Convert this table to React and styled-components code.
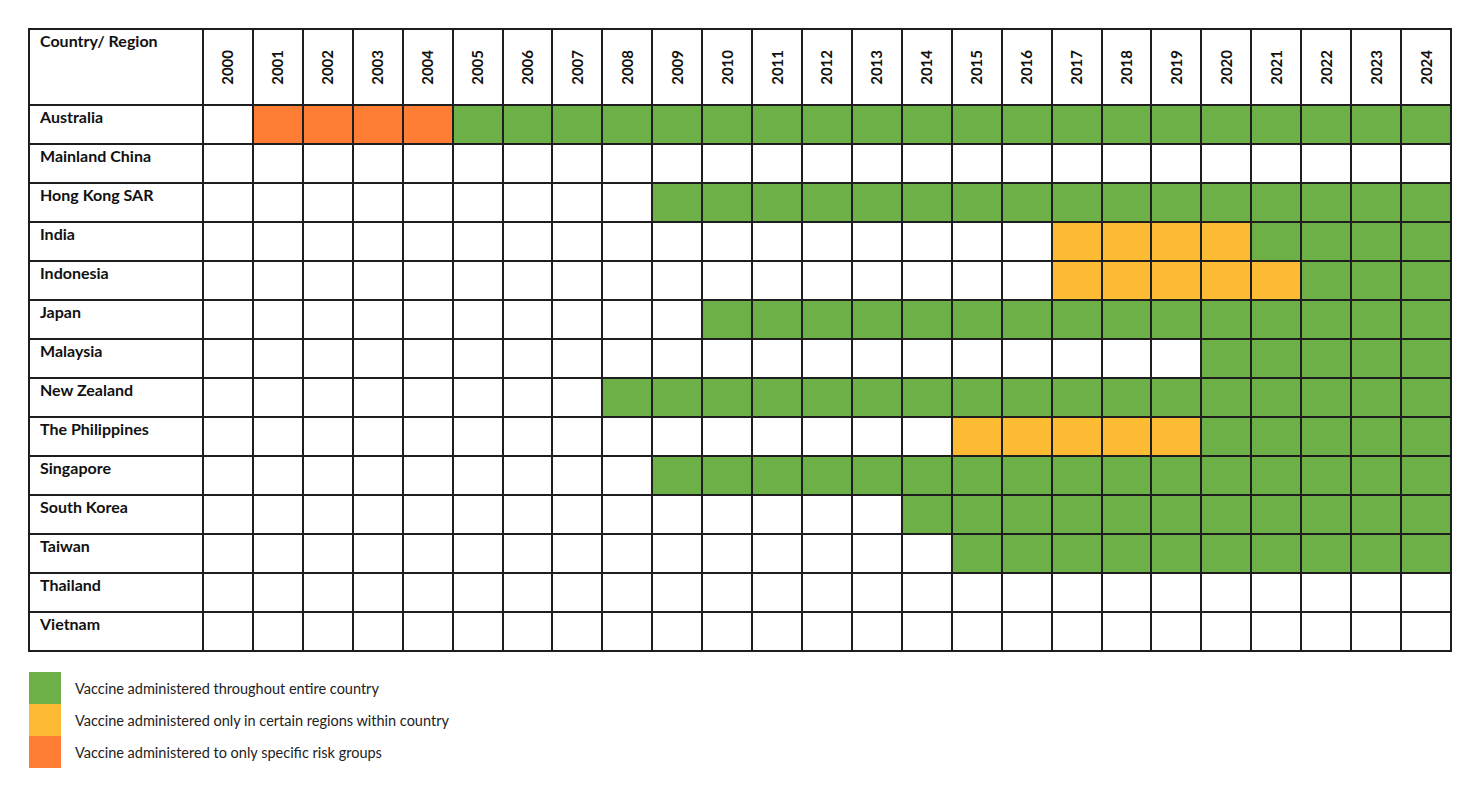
import React from "react";
import styled, { createGlobalStyle } from "styled-components";

const GlobalStyle = createGlobalStyle`
  html, body {
    margin: 0;
    padding: 0;
    background: #ffffff;
  }
  body {
    font-family: "Lato", "Liberation Sans", sans-serif;
    color: #111;
  }
`;

const GREEN = "#6db048";
const YELLOW = "#fdbb33";
const ORANGE = "#fe7d34";

const YEARS = Array.from({ length: 25 }, (_, i) => 2000 + i);

// each entry: name, then [from, to, colour] spans
const ROWS = [
  ["Australia", [2001, 2004, ORANGE], [2005, 2024, GREEN]],
  ["Mainland China"],
  ["Hong Kong SAR", [2009, 2024, GREEN]],
  ["India", [2017, 2020, YELLOW], [2021, 2024, GREEN]],
  ["Indonesia", [2017, 2021, YELLOW], [2022, 2024, GREEN]],
  ["Japan", [2010, 2024, GREEN]],
  ["Malaysia", [2020, 2024, GREEN]],
  ["New Zealand", [2008, 2024, GREEN]],
  ["The Philippines", [2015, 2019, YELLOW], [2020, 2024, GREEN]],
  ["Singapore", [2009, 2024, GREEN]],
  ["South Korea", [2014, 2024, GREEN]],
  ["Taiwan", [2015, 2024, GREEN]],
  ["Thailand"],
  ["Vietnam"],
];

const LEGEND = [
  [GREEN, "Vaccine administered throughout entire country"],
  [YELLOW, "Vaccine administered only in certain regions within country"],
  [ORANGE, "Vaccine administered to only specific risk groups"],
];

const colorFor = (spans, year) => {
  const hit = spans.find(([from, to]) => year >= from && year <= to);
  return hit ? hit[2] : "#ffffff";
};

const Page = styled.div`
  padding: 28px 0 0 28px;
  width: 1424px;
`;

const Grid = styled.div`
  display: grid;
  grid-template-columns: 172px repeat(25, 1fr);
  grid-template-rows: 74px repeat(14, 37px);
  gap: 2px;
  padding: 2px;
  background: #1e1e1e;
  box-sizing: border-box;
  width: 1424px;
`;

const Cell = styled.div`
  background: ${(p) => p.$bg || "#ffffff"};
`;

const NameCell = styled(Cell)`
  font-weight: 700;
  font-size: 16px;
  line-height: 18px;
  padding: 2px 0 0 10px;
  white-space: nowrap;
`;

const YearCell = styled(Cell)`
  display: flex;
  align-items: center;
  justify-content: center;
`;

const YearLabel = styled.span`
  writing-mode: vertical-rl;
  transform: rotate(180deg);
  font-weight: 700;
  font-size: 15px;
  line-height: 1;
`;

const Legend = styled.div`
  margin-top: 20px;
  margin-left: 1px;
  display: flex;
  flex-direction: column;
`;

const LegendRow = styled.div`
  display: flex;
  align-items: center;
  height: 32px;
  gap: 14px;
`;

const Swatch = styled.div`
  width: 32px;
  height: 32px;
  background: ${(p) => p.$color};
`;

const LegendText = styled.span`
  font-size: 14.5px;
  color: #222;
`;

export default function App() {
  return (
    <>
      <GlobalStyle />
      <Page>
        <Grid>
          <NameCell>Country/ Region</NameCell>
          {YEARS.map((y) => (
            <YearCell key={y}>
              <YearLabel>{y}</YearLabel>
            </YearCell>
          ))}
          {ROWS.map(([name, ...spans]) => (
            <React.Fragment key={name}>
              <NameCell>{name}</NameCell>
              {YEARS.map((y) => (
                <Cell key={y} $bg={colorFor(spans, y)} />
              ))}
            </React.Fragment>
          ))}
        </Grid>
        <Legend>
          {LEGEND.map(([color, text]) => (
            <LegendRow key={text}>
              <Swatch $color={color} />
              <LegendText>{text}</LegendText>
            </LegendRow>
          ))}
        </Legend>
      </Page>
    </>
  );
}
